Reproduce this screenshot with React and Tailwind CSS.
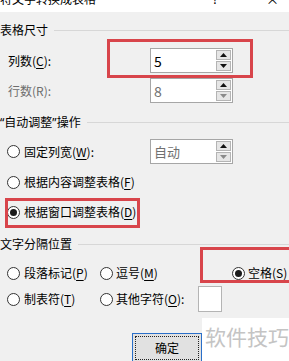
import React from "react";

const Radio = ({ checked }) => (
  <span className="w-[13px] h-[13px] rounded-full border border-[#333333] bg-white flex items-center justify-center shrink-0">
    {checked && <span className="w-[7px] h-[7px] rounded-full bg-[#1a1a1a]" />}
  </span>
);

const Arrow = ({ up, dim }) => (
  <svg width="7" height="4" viewBox="0 0 7 4">
    <polygon
      points={up ? "3.5,0 7,4 0,4" : "0,0 7,0 3.5,4"}
      fill={dim ? "#8a8a8a" : "#111111"}
    />
  </svg>
);

const Spin = ({ value, dim, textCls, upDim, downDim }) => (
  <div className="w-[83px] h-[25px] border border-[#a6a6a6] bg-white flex items-center pl-[3px] pr-[1px]">
    <span className={`flex-1 ${textCls} ${dim ? "text-[#707070]" : "text-black"} leading-none`}>{value}</span>
    <div className="flex flex-col gap-[1px] w-[15px] h-[21px]">
      <div className="flex-1 border border-[#b4b4b4] bg-[#e6e6e6] flex items-center justify-center">
        <Arrow up dim={upDim} />
      </div>
      <div className="flex-1 border border-[#b4b4b4] bg-[#e6e6e6] flex items-center justify-center">
        <Arrow dim={downDim} />
      </div>
    </div>
  </div>
);

const Header = ({ children }) => (
  <div className="flex items-center h-[16px]">
    <span className="whitespace-nowrap text-black">{children}</span>
    <div className="flex-1 h-px bg-[#d7d7d7] ml-[6px]" />
  </div>
);

const U = ({ children }) => <span className="underline underline-offset-2">{children}</span>;
const Q = ({ children }) => <span className="font-['Noto_Sans',sans-serif]">{children}</span>;

export default function App() {
  return (
    <div className="w-[289px] h-[361px] bg-[#f0f0f0] relative overflow-hidden text-[12px] font-['Noto_Sans_CJK_SC','Microsoft_YaHei',sans-serif] text-black">
      {/* title strip (cut off at the top) */}
      <div className="h-[12px] bg-white overflow-hidden">
        <div className="flex w-full items-center h-[12px] leading-[12px] -mt-[7px]">
          <span className="text-[12px] whitespace-nowrap">将文字转换成表格</span>
          <span className="ml-auto mr-[48px] text-[12px]">?</span>
          <span className="mr-[10px] text-[13px]">×</span>
        </div>
      </div>

      <div className="mt-[10px]">
        <Header>表格尺寸</Header>
      </div>

      <div className="mt-[10px] flex items-center h-[25px]">
        <span className="w-[150px] pl-[8px] whitespace-nowrap">列数(<U>C</U>):</span>
        <Spin value="5" textCls="text-[14px]" />
      </div>

      <div className="mt-[5px] flex items-center h-[25px]">
        <span className="w-[150px] pl-[8px] whitespace-nowrap text-[#6d6d6d]">行数(R):</span>
        <Spin value="8" dim textCls="text-[14px]" downDim />
      </div>

      <div className="mt-[11px]">
        <Header>
          <Q>“</Q>自动调整<Q>”</Q>操作
        </Header>
      </div>

      <div className="mt-[9px] flex items-center h-[25px]">
        <span className="w-[150px] pl-[7px] flex items-center gap-[4px] whitespace-nowrap">
          <Radio />
          <span>固定列宽(<U>W</U>):</span>
        </span>
        <Spin value="自动" dim textCls="text-[13px]" downDim />
      </div>

      <div className="mt-[10px] flex items-center h-[16px] pl-[7px] gap-[4px] whitespace-nowrap">
        <Radio />
        <span>根据内容调整表格(<U>F</U>)</span>
      </div>

      <div className="mt-[14px] flex items-center h-[16px] pl-[7px] gap-[4px] whitespace-nowrap">
        <Radio checked />
        <span>根据窗口调整表格(<U>D</U>)</span>
      </div>

      <div className="mt-[16px]">
        <Header>文字分隔位置</Header>
      </div>

      <div className="mt-[13px] flex items-center h-[16px] whitespace-nowrap">
        <span className="w-[100px] pl-[7px] flex items-center gap-[4px]">
          <Radio />
          <span>段落标记(<U>P</U>)</span>
        </span>
        <span className="w-[132px] flex items-center gap-[3px]">
          <Radio />
          <span>逗号(<U>M</U>)</span>
        </span>
        <span className="flex items-center gap-[3px]">
          <Radio checked />
          <span>空格(<U>S</U>)</span>
        </span>
      </div>

      <div className="mt-[5px] flex items-center h-[26px] whitespace-nowrap">
        <span className="w-[100px] pl-[7px] flex items-center gap-[4px]">
          <Radio />
          <span>制表符(<U>T</U>)</span>
        </span>
        <span className="w-[98px] flex items-center gap-[3px]">
          <Radio />
          <span>其他字符(<U>O</U>):</span>
        </span>
        <div className="w-[24px] h-[26px] bg-white border border-[#b4b4b4]" />
      </div>

      <div className="mt-[21px] pl-[132px]">
        <div className="w-[70px] h-[30px] border border-[#2a6fc9] bg-[#e1e1e1] p-[2px]">
          <div className="w-full h-full border border-dotted border-[#222222] flex items-center justify-center">
            <span>确定</span>
          </div>
        </div>
      </div>

      {/* annotation overlays */}
      <div className="absolute left-[107px] top-[39px] w-[146px] h-[39px] border-[3px] border-[#d8454b]" />
      <div className="absolute left-[5px] top-[198px] w-[135px] h-[30px] border-[3px] border-[#d8454b]" />
      <div className="absolute left-[200px] top-[247px] w-[100px] h-[36px] border-[3px] border-[#d8454b]" />

      {/* watermark */}
      <div className="absolute left-[202px] top-[318px] w-[87px] h-[43px] bg-white flex items-start pl-[3px] pt-[3px]">
        <span className="text-[21px] leading-[30px] text-[#c4c4c4] whitespace-nowrap">软件技巧</span>
      </div>
    </div>
  );
}
